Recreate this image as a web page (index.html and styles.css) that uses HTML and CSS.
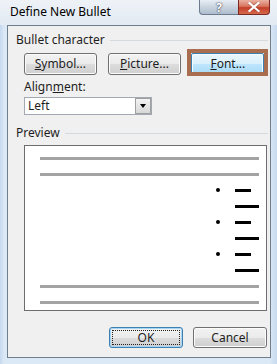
FILE: index.html
```html
<!DOCTYPE html>
<html>
<head>
<meta charset="utf-8">
<link rel="stylesheet" href="styles.css">
</head>
<body>
<div class="window">
  <div class="titlebar">
    <span class="title">Define New Bullet</span>
    <div class="caps">
      <span class="cap help">?</span>
      <span class="cap close">
        <svg width="12" height="10" viewBox="0 0 12 10"><path d="M1.5 1 L10.5 9 M10.5 1 L1.5 9" stroke="#5a1a10" stroke-width="3.4" stroke-linecap="square" opacity="0.35"/><path d="M1.5 1 L10.5 9 M10.5 1 L1.5 9" stroke="#fff" stroke-width="2.2" stroke-linecap="square"/></svg>
      </span>
    </div>
  </div>
  <div class="client">
    <div class="group-head"><span>Bullet character</span><i class="rule"></i></div>
    <div class="btn-row">
      <button class="btn"><u>S</u>ymbol...</button>
      <button class="btn btn-pic"><u>P</u>icture...</button>
      <div class="annot"><button class="btn btn-hot"><u>F</u>ont...</button></div>
    </div>
    <div class="label">Align<u>m</u>ent:</div>
    <div class="select"><span class="sel-text">Left</span><span class="sel-btn"><i class="tri"></i></span></div>
    <div class="group-head prev-head"><span>Preview</span><i class="rule"></i></div>
    <div class="preview">
      <div class="row"><i class="gray"></i></div>
      <div class="row"><i class="gray"></i></div>
      <div class="row brow"><i class="dot"></i><i class="dash short"></i></div>
      <div class="row brow"><i></i><i class="dash long"></i></div>
      <div class="row brow"><i class="dot"></i><i class="dash short"></i></div>
      <div class="row brow"><i></i><i class="dash long"></i></div>
      <div class="row brow"><i class="dot"></i><i class="dash short"></i></div>
      <div class="row brow"><i></i><i class="dash long"></i></div>
      <div class="row"><i class="gray"></i></div>
      <div class="row"><i class="gray"></i></div>
    </div>
    <div class="foot">
      <button class="btn btn-ok"><span class="focus">OK</span></button>
      <button class="btn">Cancel</button>
    </div>
  </div>
</div>
</body>
</html>
```

FILE: styles.css
```css
* { box-sizing: border-box; }
html, body { margin: 0; padding: 0; }
body {
  width: 277px;
  height: 364px;
  overflow: hidden;
  font-family: "Noto Sans", "Open Sans", sans-serif;
  font-size: 12px;
  color: #1e1e1e;
  background: #d3e3f3;
}
u { text-decoration: underline; text-underline-offset: 1px; }
.window {
  width: 277px;
  height: 364px;
  display: flex;
  flex-direction: column;
  background: linear-gradient(to right, #c4d8ee 0, #dbe8f5 4px, #dbe8f5 270px, #c7daef 277px);
}
.titlebar {
  height: 25px;
  display: flex;
  align-items: flex-start;
  background: linear-gradient(#eef2f7, #e2eaf3);
}
.title {
  margin-left: 10px;
  margin-top: 4px;
  line-height: 16px;
  font-size: 12px;
  color: #000;
}
.caps { margin-left: auto; margin-right: 7px; display: flex; }
.cap {
  height: 15px;
  display: flex;
  align-items: center;
  justify-content: center;
  border: 1px solid #6b7a8c;
  border-top: none;
}
.help {
  width: 39px;
  border-radius: 0 0 0 4px;
  background: linear-gradient(#e8eef5, #c9d4e0 50%, #aebdce);
  color: #fff;
  font-weight: bold;
  font-size: 12px;
  text-shadow: 0 0 2px #445, 0 0 1px #334;
  border-right: none;
}
.close {
  width: 32px;
  border-color: #7a2a20;
  border-radius: 0 0 4px 0;
  background: linear-gradient(#eab0a2, #d8745e 45%, #c43e28 55%, #d46a4c);
}
.client {
  flex: 1;
  margin: 0 6px 6px 7px;
  border: 1px solid #6f7d8c;
  background: #f0f0f0;
  padding: 7px 2px 0 8px;
  display: flex;
  flex-direction: column;
}
.group-head {
  display: flex;
  align-items: center;
  height: 14px;
  line-height: 14px;
  color: #1e1e1e;
}
.group-head .rule {
  flex: 1;
  height: 1px;
  background: #d5dadf;
  margin-left: 5px;
}
.btn-row {
  display: flex;
  align-items: flex-start;
  margin-top: 2px;
  padding-left: 8px;
  height: 27px;
}
.btn {
  font-family: inherit;
  font-size: 12px;
  color: #1e1e1e;
  width: 73px;
  height: 22px;
  margin: 4px 0 0 0;
  padding: 0;
  border: 1px solid #707070;
  border-radius: 3px;
  background: linear-gradient(#f2f2f2 0, #ebebeb 50%, #dddddd 51%, #cfcfcf 100%);
  box-shadow: inset 0 0 0 1px #fcfcfc;
  line-height: 18px;
}
.btn-pic { width: 74px; margin-left: 11px; }
.annot {
  margin-left: 6px;
  width: 81px;
  height: 27px;
  border: 4px solid #a96e50;
  overflow: hidden;
}
.annot .btn-hot {
  margin: 0;
  width: 73px;
  border-color: #3c7fb1;
  border-radius: 2px;
  background: linear-gradient(#eaf6fd 0, #d9f0fc 50%, #bee6fd 51%, #a7d9f5 100%);
  box-shadow: inset 0 0 0 1px #f4fbff;
}
.label {
  margin-top: 4px;
  padding-left: 8px;
  line-height: 14px;
  height: 14px;
}
.select {
  margin-top: 3px;
  margin-left: 8px;
  width: 128px;
  height: 18px;
  border: 1px solid #a3a9b3;
  background: #fff;
  display: flex;
  align-items: center;
}
.sel-text { padding-left: 3px; flex: 1; line-height: 16px; }
.sel-btn {
  width: 16px;
  height: 16px;
  border: 1px solid #a0a0a0;
  background: linear-gradient(#f3f3f3, #d8d8d8);
  display: flex;
  align-items: center;
  justify-content: center;
}
.tri {
  width: 0; height: 0;
  border-left: 3.5px solid transparent;
  border-right: 3.5px solid transparent;
  border-top: 4px solid #000;
}
.prev-head { margin-top: 11px; }
.preview {
  margin-top: 5px;
  margin-left: 8px;
  width: 243px;
  height: 166px;
  border: 1px solid #6d6d6d;
  background: #fff;
  padding: 4px 7px 0 15px;
  display: flex;
  flex-direction: column;
}
.row { height: 16px; display: flex; align-items: center; }
.row i { display: block; }
.gray { flex: 1; height: 3px; background: #a3a3a3; }
.brow { justify-content: flex-end; }
.brow > i:first-child { width: 4px; height: 4px; margin-right: 15px; }
.dot { border-radius: 50%; background: #000; }
.dash { height: 3px; background: #000; }
.short { width: 16px; margin-right: 8px; }
.long { width: 24px; }
.foot {
  display: flex;
  justify-content: flex-end;
  gap: 10px;
  margin-top: 16px;
  padding-right: 1px;
}
.foot .btn { margin: 0; width: 74px; height: 21px; line-height: 17px; }
.btn-ok {
  border-color: #3c7fb1 !important;
  box-shadow: inset 0 0 0 1px #a5d6f2 !important;
  display: flex;
  padding: 2px !important;
}
.focus {
  flex: 1;
  border: 1px dotted #222;
  line-height: 13px;
}
```
